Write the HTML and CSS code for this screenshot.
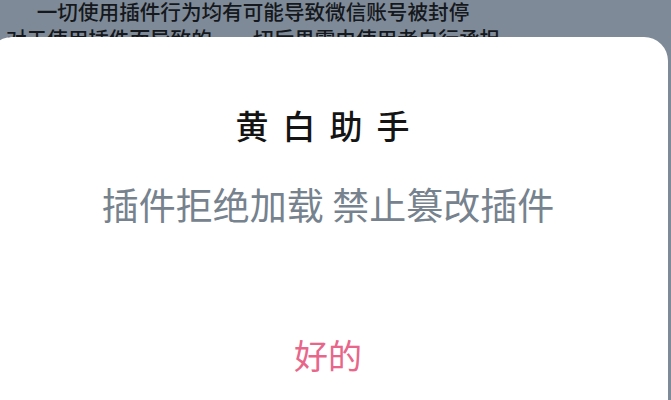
FILE: index.html
```html
<!DOCTYPE html>
<html lang="zh-CN">
<head>
<meta charset="utf-8">
<link rel="stylesheet" href="styles.css">
</head>
<body>
<div class="notice">
  <div class="notice-line">一切使用插件行为均有可能导致微信账号被封停</div>
  <div class="notice-line">对于使用插件而导致的，一切后果需由使用者自行承担</div>
</div>
<div class="dialog">
  <div class="dialog-title">黄白助手</div>
  <div class="dialog-message">插件拒绝加载 禁止篡改插件</div>
  <div class="dialog-button">好的</div>
</div>
</body>
</html>
```
FILE: styles.css
```css
html, body {
  margin: 0;
  padding: 0;
  width: 671px;
  height: 400px;
  overflow: hidden;
}
body {
  background: #7e8a97;
  font-family: "Noto Sans CJK SC", "Noto Sans", sans-serif;
  position: relative;
}
.notice {
  width: 506px;
  margin-top: -2px;
  text-align: center;
  color: #15181c;
  font-size: 20.6px;
  font-weight: 500;
  line-height: 27px;
}
.notice-line {
  white-space: nowrap;
}
.dialog {
  position: absolute;
  left: -12px;
  top: 37px;
  width: 680px;
  height: 363px;
  background: #ffffff;
  border-radius: 24px 24px 0 0;
  padding-top: 68px;
  box-sizing: border-box;
  text-align: center;
}
.dialog-title {
  font-size: 33px;
  line-height: 41px;
  font-weight: 500;
  color: #141414;
  letter-spacing: 14px;
  padding-left: 3px;
}
.dialog-message {
  margin-top: 36px;
  font-size: 37px;
  line-height: 44px;
  color: #76828d;
}
.dialog-button {
  margin-top: 108px;
  font-size: 34px;
  line-height: 42px;
  color: #e8668a;
}
```
